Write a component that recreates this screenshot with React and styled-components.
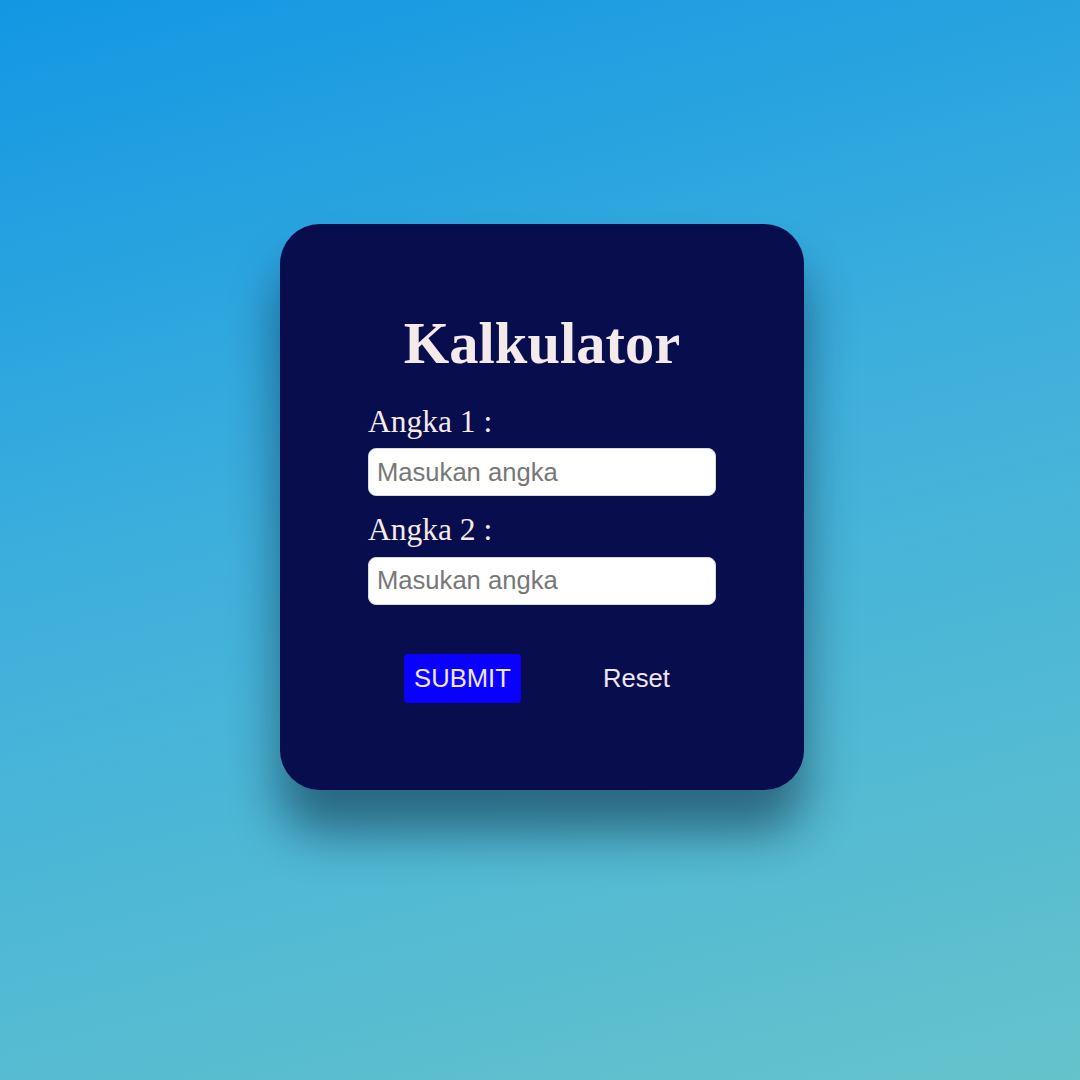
import React from "react";
import styled, { createGlobalStyle } from "styled-components";

const GlobalStyle = createGlobalStyle`
  html, body {
    margin: 0;
    padding: 0;
  }
  body {
    min-height: 1080px;
    background: linear-gradient(165deg, #1397e3 0%, #3fb0dc 45%, #65c3cb 100%);
    font-family: "Liberation Serif", "Times New Roman", serif;
  }
`;

const Page = styled.main`
  display: flex;
  justify-content: center;
  align-items: flex-start;
  padding: 224px 0 0 4px;
  min-height: 1080px;
  box-sizing: border-box;
`;

const Card = styled.section`
  width: 524px;
  box-sizing: border-box;
  padding: 86px 88px 87px;
  background: #070d4d;
  border-radius: 40px;
  box-shadow: 0 42px 50px rgba(0, 15, 35, 0.48);
  color: #f5eaea;
`;

const Title = styled.h1`
  margin: 0 0 27px;
  text-align: center;
  font-family: "Liberation Serif", "Times New Roman", serif;
  font-weight: 700;
  font-size: 58.5px;
  line-height: 1.15;
  color: #f5eaea;
`;

const Form = styled.form`
  display: flex;
  flex-direction: column;
`;

const Field = styled.div`
  display: flex;
  flex-direction: column;
  gap: 8px;
  margin-bottom: ${(p) => p.$gap || 0}px;
`;

const Label = styled.label`
  font-family: "Liberation Serif", "Times New Roman", serif;
  font-size: 31.5px;
  line-height: 1.15;
  color: #f5eaea;
`;

const Input = styled.input`
  box-sizing: border-box;
  width: 100%;
  height: 48px;
  padding: 0 8px;
  border: 1px solid #d8d8e0;
  border-radius: 8px;
  background: #ffffff;
  font-family: "Liberation Sans", Arial, sans-serif;
  font-size: 25.6px;
  color: #222;
  outline: none;
  &::placeholder {
    color: #777777;
  }
`;

const Actions = styled.div`
  display: flex;
  justify-content: space-around;
  align-items: center;
`;

const Button = styled.button`
  box-sizing: border-box;
  padding: 10px;
  border: none;
  border-radius: 4px;
  background: ${(p) => (p.$primary ? "#0a00ff" : "transparent")};
  color: #efe6f2;
  font-family: "Liberation Sans", Arial, sans-serif;
  font-size: 25.6px;
  line-height: 1.15;
  cursor: pointer;
`;

export default function App() {
  return (
    <>
      <GlobalStyle />
      <Page>
        <Card>
          <Title>Kalkulator</Title>
          <Form onSubmit={(e) => e.preventDefault()}>
            <Field $gap={16}>
              <Label htmlFor="a1">Angka 1 :</Label>
              <Input id="a1" type="text" placeholder="Masukan angka" />
            </Field>
            <Field $gap={49}>
              <Label htmlFor="a2">Angka 2 :</Label>
              <Input id="a2" type="text" placeholder="Masukan angka" />
            </Field>
            <Actions>
              <Button $primary type="submit">SUBMIT</Button>
              <Button type="reset">Reset</Button>
            </Actions>
          </Form>
        </Card>
      </Page>
    </>
  );
}
